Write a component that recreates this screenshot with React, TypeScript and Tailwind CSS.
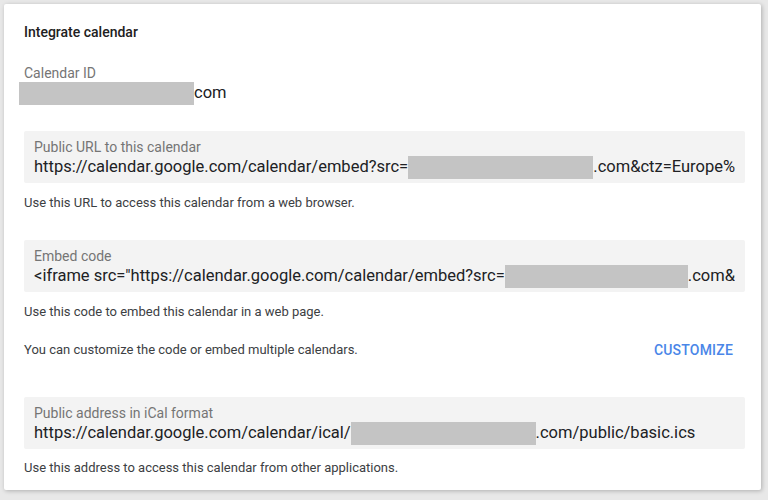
const Redacted = ({ w, className = "" }: { w: number; className?: string }) => (
  <span
    className={"inline-block h-[23px] bg-[#c4c4c4] " + className}
    style={{ width: w }}
  />
);

const FieldBox = ({ label, children }: { label: string; children: React.ReactNode }) => (
  <div className="h-[52px] rounded-[2px] bg-[#f3f3f3] px-[10px] pt-[8px]">
    <div className="text-[14px] leading-[16px] text-[#757575]">{label}</div>
    <div className="flex h-[24px] items-center whitespace-nowrap overflow-hidden text-[16.5px] text-[#202124]">
      {children}
    </div>
  </div>
);

export default function App() {
  return (
    <div className="min-h-[500px] w-[768px] bg-[#e8e8e8] pt-[4px] font-['Roboto',sans-serif]">
      <div className="ml-[4px] w-[757px] rounded-[2px] bg-white pb-[13px] pl-[20px] pr-[16px] pt-[18px] shadow-[1px_1px_4px_rgba(0,0,0,0.25)]">
        <h2 className="text-[14px] font-medium leading-[20px] text-[#212121]">Integrate calendar</h2>

        {/* calendar id */}
        <div className="mt-[23px] text-[14px] leading-[16px] text-[#757575]">Calendar ID</div>
        <div className="flex h-[24px] items-center text-[16.5px] text-[#202124]">
          <Redacted w={175} className="-ml-[5px] h-[22px]" />
          <span>com</span>
        </div>

        <div className="mt-[26px]">
          <FieldBox label="Public URL to this calendar">
            <span>https://calendar.google.com/calendar/embed?src=</span>
            <Redacted w={187} />
            <span>.com&amp;ctz=Europe%</span>
          </FieldBox>
        </div>
        <p className="mt-[11px] text-[13px] leading-[18px] text-[#3c4043]">
          Use this URL to access this calendar from a web browser.
        </p>

        <div className="mt-[28px]">
          <FieldBox label="Embed code">
            <span>&lt;iframe src="https://calendar.google.com/calendar/embed?src=</span>
            <Redacted w={185} />
            <span>.com&amp;</span>
          </FieldBox>
        </div>
        <p className="mt-[11px] text-[13px] leading-[18px] text-[#3c4043]">
          Use this code to embed this calendar in a web page.
        </p>

        <div className="mt-[20px] flex items-center justify-between pr-[12px]">
          <p className="text-[13px] leading-[18px] text-[#3c4043]">
            You can customize the code or embed multiple calendars.
          </p>
          <button className="text-[14px] font-medium leading-[18px] tracking-[0.2px] text-[#4a86e8]">
            CUSTOMIZE
          </button>
        </div>

        <div className="mt-[38px]">
          <FieldBox label="Public address in iCal format">
            <span>https://calendar.google.com/calendar/ical/</span>
            <Redacted w={185} />
            <span>.com/public/basic.ics</span>
          </FieldBox>
        </div>
        <p className="mt-[10px] text-[13px] leading-[18px] text-[#3c4043]">
          Use this address to access this calendar from other applications.
        </p>
      </div>
    </div>
  );
}
